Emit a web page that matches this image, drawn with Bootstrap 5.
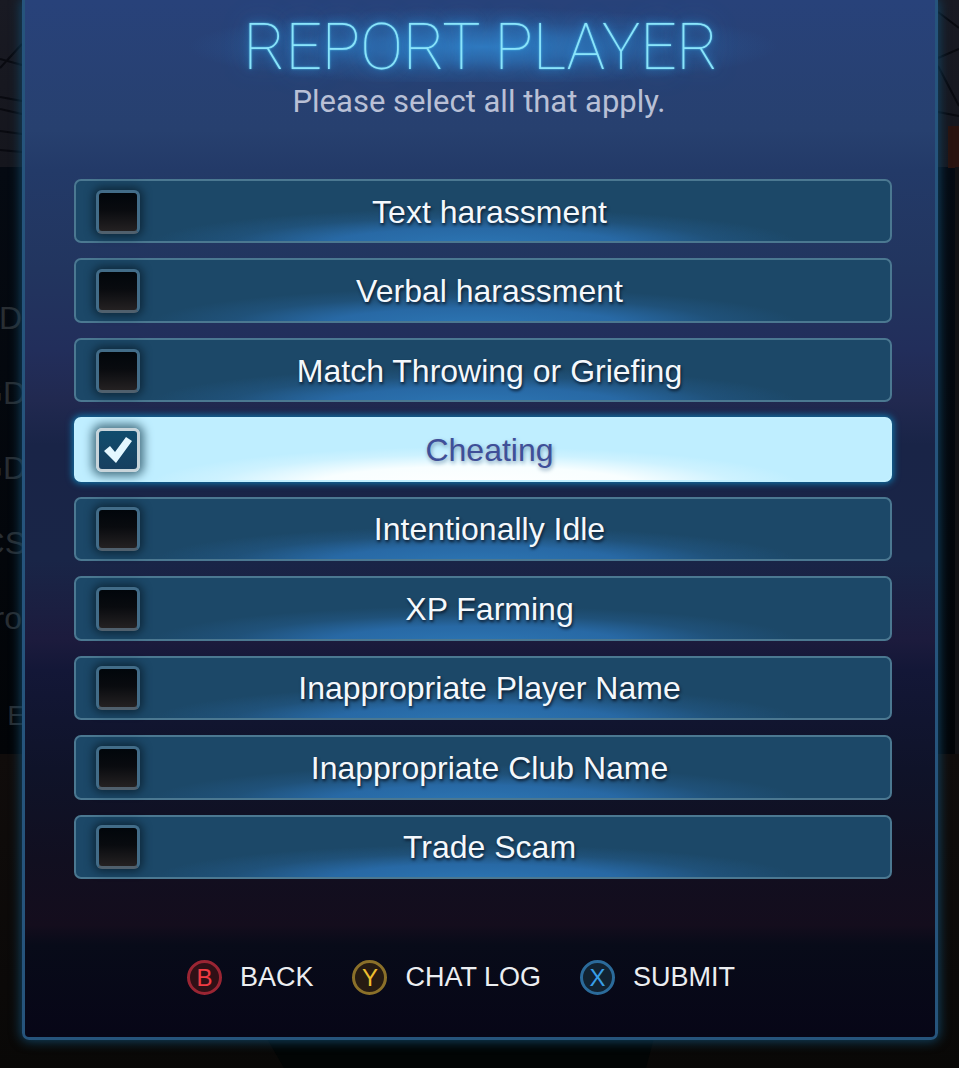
<!DOCTYPE html>
<html lang="en">
<head>
<meta charset="utf-8">
<meta name="viewport" content="width=device-width, initial-scale=1">
<title>Report Player</title>
<link href="https://cdn.jsdelivr.net/npm/bootstrap@5.3.0/dist/css/bootstrap.min.css" rel="stylesheet">
<style>
  body {
    font-family: "Liberation Sans", Arial, sans-serif;
    background: linear-gradient(#191a23 0, #15161d 167px, #050a12 167px, #020407 754px, #100c0b 754px, #090807 100%);
    overflow: hidden;
  }
  .scene { z-index: -1; }
  .side-menu { width: 22px; padding-top: 281px; font-size: 32px; color: #292e33; overflow: hidden; flex: none; }
  .side-menu span { display: flex; justify-content: flex-end; height: 75px; line-height: 75px; white-space: nowrap; }
  .side-menu .side-last { font-size: 28px; height: 119px; line-height: 119px; }
  .side-menu .under { margin-right: -4px; }
  .report-panel {
    margin-right: 21px;
    margin-bottom: 28px;
    padding: 0 43px 42px 49px;
    border: 3px solid #26547c;
    border-top: 0;
    border-radius: 0 0 7px 7px;
    background: linear-gradient(#28427a 0, #27406f 130px, #233a68 170px, #22355f 270px, #222e5b 350px, #212950 400px, #192447 445px, #192547 560px, #1c1b3d 640px, #131737 670px, #0f1329 770px, #110f20 860px, #140d1d 925px, #080b19 945px, #070617 100%);
    box-shadow: 0 0 12px 1px #124666;
  }
  .report-title {
    font-family: Roboto, "Liberation Sans", sans-serif;
    font-weight: 100;
    font-size: 64px;
    line-height: 68px;
    color: #8be4fa;
    text-shadow: 0 0 2px #55cdf5, 0 0 8px #2b8fd6, 0 0 24px #2b80cc;
    background: radial-gradient(ellipse 36% 48% at 50% 57%, #3079bf 0, #2e6fb3cc 35%, #2b62a466 65%, transparent 100%);
    white-space: nowrap;
    padding: 14px 4px 0 0;
  }
  .report-hint { font-family: Roboto, "Liberation Sans", sans-serif; font-size: 31px; line-height: 40px; color: #b9c0d6; padding-right: 8px; }
  .reasons { display: grid; grid-auto-rows: 1fr; gap: 15px; margin: 57px 0 80px; }
  .reason {
    border: 2px solid #4b7891;
    border-radius: 7px;
    color: #f4f8fc;
    font-size: 32px;
    line-height: 40px;
    text-shadow: 1px 2px 3px #0b1c30;
    background: radial-gradient(ellipse 40% 60% at 49% 106%, #2c75b3 0, #2869a5 45%, #235a8a80 75%, transparent 100%), #1c4868;
    cursor: pointer;
  }
  .reason input {
    appearance: none;
    flex: none;
    width: 44px;
    height: 44px;
    margin: 1px 0 0 20px;
    border: 3px solid #426c88;
    border-bottom-color: #50606d;
    border-radius: 6px;
    background: linear-gradient(#01060b, #090b0f 45%, #242122);
    box-shadow: 0 0 9px 3px #0e293c;
  }
  .reason .caption { flex: 1; text-align: center; padding: 1px 51px 0 0; }
  .reason:has(input:checked) {
    color: #3f4f98;
    border-color: #c2efff;
    text-shadow: 1px 2px 4px #7b9cb5;
    background: radial-gradient(ellipse 40% 60% at 49% 106%, #fff 0, #f8feff 50%, #dcf6ff80 80%, transparent 100%) border-box, #bfeeff;
    box-shadow: 0 0 6px 2px #116da0;
  }
  .reason input:checked {
    border-color: #c8d4da;
    background: url("data:image/svg+xml,%3Csvg xmlns='http://www.w3.org/2000/svg' viewBox='0 0 38 38'%3E%3Cpath d='M5 20l6-5 5 6L27 6l6 4-16 22z' fill='%23e4f7ff'/%3E%3C/svg%3E") center/38px 38px no-repeat, linear-gradient(#104c6d, #173f60);
    box-shadow: 0 0 10px 4px #4b7587;
  }
  .actions { gap: 39px; padding-right: 44px; }
  .action { border: 0; background: none; padding: 0; gap: 18px; color: #eceef1; font-size: 27px; line-height: 36px; }
  .pad { width: 35px; height: 35px; border: 3px solid; border-radius: 50%; font-size: 24px; line-height: 30px; }
  .pad-b { color: #f23b43; border-color: #9a2533; background: #301016; }
  .pad-y { color: #edbe2f; border-color: #8b7029; background: #261b12; }
  .pad-x { color: #399fe8; border-color: #2b6b9b; background: #112332; }
</style>
</head>
<body>
<svg class="scene position-absolute top-0 start-0 w-100 h-100" viewBox="0 0 959 1068" preserveAspectRatio="none" aria-hidden="true">
  <g fill="none" stroke="#090a10" stroke-width="2">
    <path d="M0 68L22 44M0 59l22 6M0 97l22 4M0 109l22 5M0 131l22 3M0 150l22 2"/>
    <path d="M938 12l21 16M938 58l21-9M938 112l21 4M938 66l21 40"/>
  </g>
  <path d="M948 126h11v42h-11z" fill="#2a130f"/>
  <path d="M955 167h4v587h-4z" fill="#111114"/>
  <path d="M262 1030h394l-10 38H284z" fill="#020505"/>
</svg>

<main class="d-flex min-vh-100">
  <div class="side-menu" aria-hidden="true">
    <span>D</span><span class="under">GD</span><span class="under">GD</span><span class="under">CS</span><span>ro</span><span class="side-last under">E</span>
  </div>

  <form class="report-panel flex-grow-1 d-flex flex-column">
    <header class="text-center">
      <h1 class="report-title m-0">REPORT PLAYER</h1>
      <p class="report-hint m-0">Please select all that apply.</p>
    </header>

    <div class="reasons flex-grow-1">
      <label class="reason d-flex align-items-center"><input type="checkbox" name="reason"><span class="caption">Text harassment</span></label>
      <label class="reason d-flex align-items-center"><input type="checkbox" name="reason"><span class="caption">Verbal harassment</span></label>
      <label class="reason d-flex align-items-center"><input type="checkbox" name="reason"><span class="caption">Match Throwing or Griefing</span></label>
      <label class="reason d-flex align-items-center"><input type="checkbox" name="reason" checked><span class="caption">Cheating</span></label>
      <label class="reason d-flex align-items-center"><input type="checkbox" name="reason"><span class="caption">Intentionally Idle</span></label>
      <label class="reason d-flex align-items-center"><input type="checkbox" name="reason"><span class="caption">XP Farming</span></label>
      <label class="reason d-flex align-items-center"><input type="checkbox" name="reason"><span class="caption">Inappropriate Player Name</span></label>
      <label class="reason d-flex align-items-center"><input type="checkbox" name="reason"><span class="caption">Inappropriate Club Name</span></label>
      <label class="reason d-flex align-items-center"><input type="checkbox" name="reason"><span class="caption">Trade Scam</span></label>
    </div>

    <footer class="actions d-flex justify-content-center">
      <button type="button" class="action d-flex align-items-center"><span class="pad pad-b">B</span>BACK</button>
      <button type="button" class="action d-flex align-items-center"><span class="pad pad-y">Y</span>CHAT LOG</button>
      <button type="button" class="action d-flex align-items-center"><span class="pad pad-x">X</span>SUBMIT</button>
    </footer>
  </form>
</main>
<script src="https://cdn.jsdelivr.net/npm/bootstrap@5.3.0/dist/js/bootstrap.bundle.min.js"></script>
</body>
</html>
